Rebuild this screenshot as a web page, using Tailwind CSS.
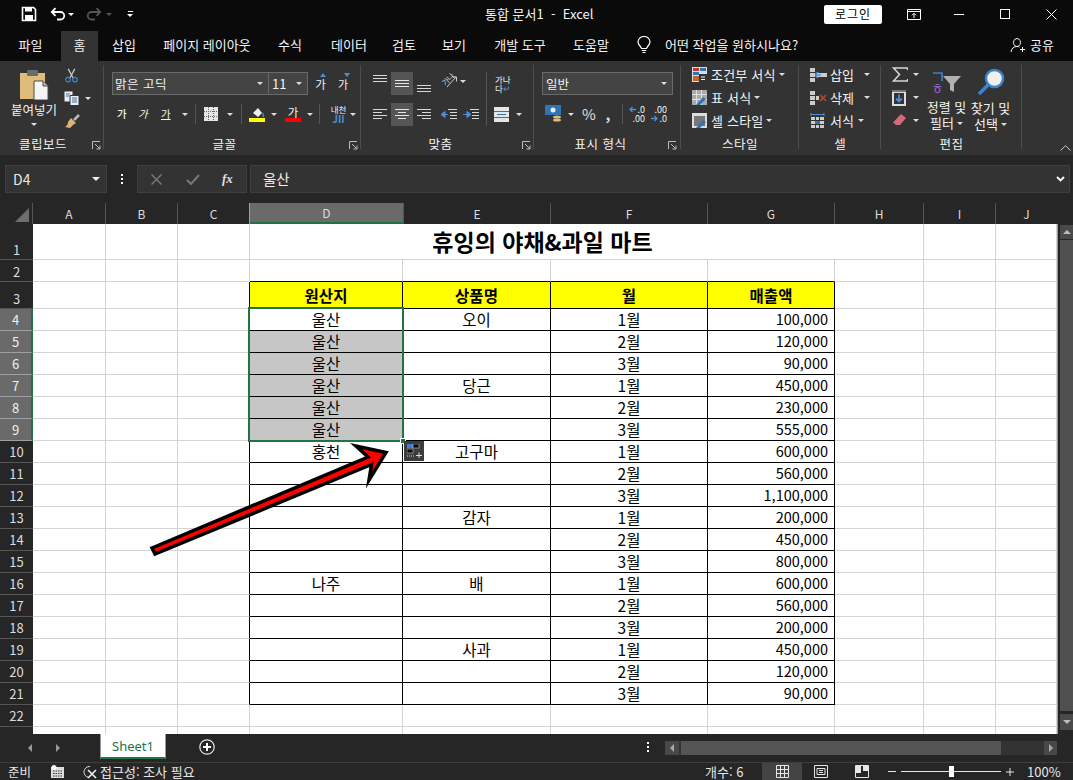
<!DOCTYPE html>
<html lang="ko">
<head>
  <meta charset="UTF-8" />
  <title>통합 문서1 - Excel</title>
  <script src="https://cdn.jsdelivr.net/npm/@tailwindcss/browser@4"></script>
</head>
<body class="w-[1073px] h-[780px] overflow-hidden bg-[#262626] text-[12px] leading-[16px] text-[#f0f0f0] font-['Noto_Sans_CJK_KR','Noto_Sans',sans-serif]">

  <!-- title bar -->
  <div class="h-[28px] bg-[#0a0a0a] flex items-center">
    <div class="w-[21px]"></div>
    <svg class="w-[16px] h-[16px]" viewBox="0 0 16 16"><path d="M1.5 1.5h11l2 2v11h-13z" fill="none" stroke="#fff" stroke-width="1.6"/><rect x="4" y="1.5" width="7" height="4" fill="#fff"/><rect x="4" y="9" width="8" height="5.5" fill="#fff"/></svg>
    <div class="w-[13px]"></div>
    <svg class="w-[16px] h-[14px]" viewBox="0 0 16 14"><path d="M2 5h8.5a3.6 3.6 0 0 1 0 7.5H7M5.5 1.2 1.8 5l3.7 3.8" fill="none" stroke="#fff" stroke-width="1.8"/></svg>
    <div class="w-[7px] flex justify-end ml-[1px]"><span class="w-0 h-0 border-x-[3px] border-x-transparent border-t-[3px] border-t-white"></span></div>
    <div class="w-[12px]"></div>
    <svg class="w-[16px] h-[14px]" viewBox="0 0 16 14"><path d="M14 5H5.500a3.600 3.600 0 0 0 0 7.500H9M10.500 1.200 14.200 5l-3.700 3.800" fill="none" stroke="#555" stroke-width="1.8"/></svg>
    <div class="w-[10px] flex justify-end"><span class="w-0 h-0 border-x-[3px] border-x-transparent border-t-[3px] border-t-[#555]"></span></div>
    <div class="w-[15px]"></div>
    <div class="flex flex-col items-center gap-[2px]"><span class="w-[5px] h-[1px] bg-white"></span><span class="w-0 h-0 border-x-[3px] border-x-transparent border-t-[3px] border-t-white"></span></div>
    <div class="w-[352px]"></div>
    <div class="w-[108px] text-[13px] whitespace-pre text-[#f4f4f4]">통합 문서1  -  Excel</div>
    <div class="w-[231px]"></div>
    <div class="w-[58px] h-[19px] bg-white rounded-[2px] text-black text-[12px] flex items-center justify-center tracking-[1px]">로그인</div>
    <div class="w-[25px]"></div>
    <svg class="w-[14px] h-[11px]" viewBox="0 0 14 11"><path d="M.5.500h13v10H.5zM.5 2.500h13M7 9V4.500M5 6.300 7 4.300l2 2" fill="none" stroke="#fff"/></svg>
    <div class="w-[33px]"></div>
    <div class="w-[10px] h-[1px] bg-white"></div>
    <div class="w-[36px]"></div>
    <div class="w-[10px] h-[10px] border border-white"></div>
    <div class="w-[36px]"></div>
    <svg class="w-[11px] h-[11px]" viewBox="0 0 11 11"><path d="M.5.500l10 10M10.500.500l-10 10" stroke="#fff" fill="none"/></svg>
  </div>

  <!-- tabs -->
  <div class="h-[33px] bg-[#0a0a0a] flex items-end text-[13px] text-[#f4f4f4]">
    <div class="w-[61px] h-[30px] pb-[3px] flex items-center justify-center">파일</div>
    <div class="w-[37px] h-[30px] pb-[3px] flex items-center justify-center bg-[#333333]">홈</div>
    <div class="w-[52px] h-[30px] pb-[3px] flex items-center justify-center">삽입</div>
    <div class="w-[114px] h-[30px] pb-[3px] flex items-center justify-center">페이지 레이아웃</div>
    <div class="w-[52px] h-[30px] pb-[3px] flex items-center justify-center">수식</div>
    <div class="w-[66px] h-[30px] pb-[3px] flex items-center justify-center">데이터</div>
    <div class="w-[44px] h-[30px] pb-[3px] flex items-center justify-center">검토</div>
    <div class="w-[56px] h-[30px] pb-[3px] flex items-center justify-center">보기</div>
    <div class="w-[76px] h-[30px] pb-[3px] flex items-center justify-center">개발 도구</div>
    <div class="w-[66px] h-[30px] pb-[3px] flex items-center justify-center">도움말</div>
    <div class="w-[13px]"></div>
    <div class="w-[28px] h-[30px] pb-[3px] flex items-center">
      <svg class="w-[14px] h-[18px]" viewBox="0 0 14 18"><path d="M4.500 12.500C4 10 1 9 1 6a6 5.500 0 0 1 12 0c0 3-3 4-3.500 6.500zM4.800 14.500h4.400M5.500 16.500h3" fill="none" stroke="#fff" stroke-width="1.200"/></svg>
    </div>
    <div class="w-[345px] h-[30px] pb-[3px] flex items-center">어떤 작업을 원하시나요?</div>
    <div class="h-[30px] pb-[3px] flex items-center">
      <svg class="w-[15px] h-[16px]" viewBox="0 0 15 16"><path d="M7 1.500a3.500 4 0 1 1-.01 0M1 15c.5-3.500 2.500-5.500 6-5.500 1 0 2 .2 2.500.6M10 12.500h5M12.500 10v5" fill="none" stroke="#f4f4f4"/></svg>
    </div>
    <div class="ml-[5px] h-[30px] pb-[3px] flex items-center">공유</div>
  </div>

  <!-- ribbon -->
  <div class="h-[94px] bg-[#333333] flex text-[13px] text-[#f2f2f2]">

    <!-- clipboard -->
    <div class="w-[104px] relative flex flex-col">
      <div class="h-[72px] flex">
        <div class="w-[64px] flex flex-col items-center pt-[8px] pr-[-4px]">
          <svg class="ml-[4px] w-[30px] h-[31px]" viewBox="0 0 30 31"><path d="M1 4h25v26H1z" fill="#e0bc7a"/><rect x="8" y="1" width="11" height="6" rx="1" fill="#6b6b6b"/><path d="M15 12h9l5 5v14H15z" fill="#f5f5f5" stroke="#4a4a4a"/><path d="M24 12v5h5" fill="#bbb" stroke="#4a4a4a"/></svg>
          <div class="mt-[2px] ml-[4px] text-[12.500px] whitespace-nowrap">붙여넣기</div>
          <span class="mt-[5px] ml-[4px] w-0 h-0 border-x-[3px] border-x-transparent border-t-[3px] border-t-[#e0e0e0]"></span>
        </div>
        <div class="flex flex-col pt-[7px] gap-[8px]">
          <svg class="w-[15px] h-[15px]" viewBox="0 0 16 18"><path d="M4 1l6 11M12 1 6 12" stroke="#c9c9c9" stroke-width="1.500"/><circle cx="3.800" cy="14" r="2.700" fill="none" stroke="#3e84cc" stroke-width="1.400"/><circle cx="12.200" cy="14" r="2.700" fill="none" stroke="#3e84cc" stroke-width="1.400"/></svg>
          <div class="flex items-center">
            <svg class="w-[16px] h-[15px]" viewBox="0 0 16 15"><path d="M.5.500h8v10h-8z" fill="#eee"/><path d="M6 4.500h9v10H6z" fill="#eee" stroke="#333"/><path d="M2 3h4M2 5h3M8 7h5M8 9h5M8 11h5" stroke="#2f75b5"/></svg>
            <span class="ml-[5px] w-0 h-0 border-x-[3px] border-x-transparent border-t-[3px] border-t-[#e0e0e0]"></span>
          </div>
          <svg class="w-[16px] h-[15px]" viewBox="0 0 16 15"><path d="M10 6 15 1" stroke="#bbb" stroke-width="2.500"/><path d="M7 4l5 5-3 2-3 3-5-1c2-1 3-3 3-5z" fill="#dcb27a"/></svg>
        </div>
      </div>
      <div class="h-[22px] pt-[3px] flex items-start justify-center pr-[18px] tracking-[.5px] text-[12.500px]">클립보드</div>
      <svg class="absolute left-[92px] top-[80px] w-[9px] h-[9px]" viewBox="0 0 9 9"><path d="M.500 8V.500H8M3 3l5 5M8 4.500V8H4.500" fill="none" stroke="#bbb"/></svg>
      <div class="absolute right-0 top-[4px] w-[1px] h-[84px] bg-[#4d4d4d]"></div>
    </div>

    <!-- font -->
    <div class="w-[257px] relative flex flex-col">
      <div class="h-[72px] pl-[8px] pt-[11px]">
        <div class="flex items-center h-[23px]">
          <div class="w-[157px] h-[23px] bg-[#444444] border border-[#6a6a6a] flex items-center justify-between pl-[2px] pr-[5px] text-[12.500px] tracking-[.5px]">맑은 고딕<span class="w-0 h-0 border-x-[3px] border-x-transparent border-t-[3px] border-t-[#ddd]"></span></div>
          <div class="w-[39px] h-[23px] bg-[#444444] border border-[#6a6a6a] border-l-0 flex items-center justify-between pl-[3px] pr-[5px] text-[13px]">11<span class="w-0 h-0 border-x-[3px] border-x-transparent border-t-[3px] border-t-[#ddd]"></span></div>
          <div class="w-[23px] ml-[1px] text-[11.500px] text-center relative">가<span class="absolute left-[11px] top-[-3px] w-0 h-0 border-x-[3px] border-x-transparent border-b-[4px] border-b-[#4a90d9]"></span></div>
          <div class="w-[22px] text-[11px] text-center relative">가<span class="absolute left-[12px] top-[-3px] w-0 h-0 border-x-[3px] border-x-transparent border-t-[4px] border-t-[#4a90d9]"></span></div>
        </div>
        <div class="flex items-center h-[24px] mt-[7px] text-[10.500px]">
          <div class="w-[5px]"></div>
          <span class="font-medium w-[21px]">가</span>
          <span class="italic w-[23px]">가</span>
          <span class="underline w-[21px]">가</span>
          <span class="w-0 h-0 border-x-[3px] border-x-transparent border-t-[3px] border-t-[#ddd]"></span>
          <div class="ml-[7px] mr-[8px] w-[1px] h-[20px] bg-[#555]"></div>
          <svg class="w-[14px] h-[14px]" viewBox="0 0 14 14"><rect width="14" height="14" fill="#e6e6e6"/><path d="M0 4.500h14M0 9.500h14M4.500 0v14M9.500 0v14" stroke="#666" stroke-dasharray="1 1"/></svg>
          <span class="ml-[9px] w-0 h-0 border-x-[3px] border-x-transparent border-t-[3px] border-t-[#ddd]"></span>
          <div class="ml-[8px] mr-[7px] w-[1px] h-[20px] bg-[#555]"></div>
          <svg class="w-[16px] h-[16px]" viewBox="0 0 16 16"><path d="M4 7l5-5 4 5-4 4z" fill="#eee"/><path d="M13 7c1.500 1 1.500 3 1 4" stroke="#3e84cc" fill="none" stroke-width="1.500"/><rect y="12" width="16" height="4" fill="#ffff00"/></svg>
          <span class="ml-[6px] w-0 h-0 border-x-[3px] border-x-transparent border-t-[3px] border-t-[#ddd]"></span>
          <div class="ml-[8px] w-[16px] flex flex-col items-center"><span class="text-[11.500px] leading-[12px]">가</span><span class="w-[16px] h-[4px] bg-[#ff0000]"></span></div>
          <span class="ml-[6px] w-0 h-0 border-x-[3px] border-x-transparent border-t-[3px] border-t-[#ddd]"></span>
          <div class="ml-[6px] mr-[10px] w-[1px] h-[20px] bg-[#555]"></div>
          <div class="w-[17px] flex flex-col items-center text-[8.500px] leading-[9px] whitespace-nowrap">내천<span class="text-[10px] leading-[9px] text-[#4a90d9] font-bold">JII</span></div>
          <span class="ml-[3px] w-0 h-0 border-x-[3px] border-x-transparent border-t-[3px] border-t-[#ddd]"></span>
        </div>
      </div>
      <div class="h-[22px] pt-[3px] flex items-start justify-center pr-[16px] text-[12.500px] tracking-[.5px]">글꼴</div>
      <svg class="absolute left-[245px] top-[80px] w-[9px] h-[9px]" viewBox="0 0 9 9"><path d="M.500 8V.500H8M3 3l5 5M8 4.500V8H4.500" fill="none" stroke="#bbb"/></svg>
      <div class="absolute right-0 top-[4px] w-[1px] h-[84px] bg-[#4d4d4d]"></div>
    </div>

    <!-- alignment -->
    <div class="w-[173px] relative flex flex-col">
      <div class="h-[72px] pl-[12px] pt-[11px]">
        <div class="flex items-start h-[23px]">
          <svg class="w-[14px] h-[23px]" viewBox="0 0 14 23"><path d="M0 3.500h14M0 6.500h14M0 9.500h14" stroke="#d8d8d8"/></svg>
          <div class="ml-[4px] w-[22px] h-[23px] bg-[#555555] flex items-center justify-center"><svg class="w-[14px] h-[9px]" viewBox="0 0 14 9"><path d="M0 1.500h14M0 4.500h14M0 7.500h14" stroke="#e6e6e6"/></svg></div>
          <svg class="ml-[4px] w-[14px] h-[23px]" viewBox="0 0 14 23"><path d="M0 13.500h14M0 16.500h14M0 19.500h14" stroke="#d8d8d8"/></svg>
          <div class="ml-[10px] w-[16px] h-[18px] relative">
            <span class="absolute left-0 top-[3px] -rotate-45 text-[7.500px] leading-[8px] whitespace-nowrap text-[#cfcfcf]">가나</span>
            <svg class="absolute left-[3px] top-[1px] w-[14px] h-[16px]" viewBox="0 0 14 16"><path d="M3 14 12 4M8 3.500l4.500.500v4.500" fill="none" stroke="#cfcfcf"/></svg>
          </div>
          <span class="ml-[3px] mt-[8px] w-0 h-0 border-x-[3px] border-x-transparent border-t-[3px] border-t-[#ddd]"></span>
          <div class="ml-[20px] mr-[8px] w-[1px] h-[54px] bg-[#555]"></div>
          <div class="text-[8.500px] leading-[9px] w-[16px] mt-[3px] whitespace-nowrap">가나<br>다<span class="text-[#4a90d9]">↵</span></div>
        </div>
        <div class="flex items-center h-[23px] mt-[8px]">
          <svg class="w-[14px] h-[11px]" viewBox="0 0 14 11"><path d="M0 .500h14M0 3.500h9M0 6.500h14M0 9.500h9" stroke="#d8d8d8"/></svg>
          <div class="ml-[4px] w-[22px] h-[23px] bg-[#555555] flex items-center justify-center"><svg class="w-[14px] h-[11px]" viewBox="0 0 14 11"><path d="M0 .500h14M3 3.500h8M0 6.500h14M3 9.500h8" stroke="#e6e6e6"/></svg></div>
          <svg class="ml-[4px] w-[14px] h-[11px]" viewBox="0 0 14 11"><path d="M0 .500h14M5 3.500h9M0 6.500h14M5 9.500h9" stroke="#d8d8d8"/></svg>
          <svg class="ml-[10px] w-[16px] h-[12px]" viewBox="0 0 16 12"><path d="M7 .500h9M9 3.500h7M9 6.500h7M9 9.500h7" stroke="#d8d8d8"/><path d="M7 5.500H3M0 5.500 4 2.500v6z" fill="#4a90d9" stroke="#4a90d9"/></svg>
          <svg class="ml-[6px] w-[16px] h-[12px]" viewBox="0 0 16 12"><path d="M7 .500h9M9 3.500h7M9 6.500h7M9 9.500h7" stroke="#d8d8d8"/><path d="M0 5.500h4M8 5.500 4 2.500v6z" fill="#4a90d9" stroke="#4a90d9"/></svg>
          <svg class="ml-[15px] w-[15px] h-[15px]" viewBox="0 0 15 15"><rect width="15" height="15" fill="#e6e6e6"/><path d="M0 4.500h15M0 10.500h15" stroke="#666"/><path d="M3 7.500h9" stroke="#2f75b5"/></svg>
          <span class="ml-[7px] w-0 h-0 border-x-[3px] border-x-transparent border-t-[3px] border-t-[#ddd]"></span>
        </div>
      </div>
      <div class="h-[22px] pt-[3px] flex items-start justify-center pr-[14px] text-[12.500px] tracking-[.5px]">맞춤</div>
      <svg class="absolute left-[161px] top-[80px] w-[9px] h-[9px]" viewBox="0 0 9 9"><path d="M.500 8V.500H8M3 3l5 5M8 4.500V8H4.500" fill="none" stroke="#bbb"/></svg>
      <div class="absolute right-0 top-[4px] w-[1px] h-[84px] bg-[#4d4d4d]"></div>
    </div>

    <!-- number -->
    <div class="w-[147px] relative flex flex-col">
      <div class="h-[72px] pl-[8px] pt-[11px]">
        <div class="w-[131px] h-[23px] bg-[#444444] border border-[#6a6a6a] flex items-center justify-between pl-[3px] pr-[5px] text-[12.500px]">일반<span class="w-0 h-0 border-x-[3px] border-x-transparent border-t-[3px] border-t-[#ddd]"></span></div>
        <div class="flex items-center h-[24px] mt-[7px]">
          <svg class="ml-[3px] w-[17px] h-[18px]" viewBox="0 0 17 18"><rect width="16" height="10" fill="#2f75b5"/><circle cx="8" cy="5" r="2.500" fill="#eee"/><ellipse cx="12" cy="12" rx="4" ry="1.600" fill="#e0bc7a"/><ellipse cx="12" cy="15" rx="4" ry="1.600" fill="#e0bc7a"/></svg>
          <span class="ml-[6px] w-0 h-0 border-x-[3px] border-x-transparent border-t-[3px] border-t-[#ddd]"></span>
          <span class="ml-[5px] text-[15px] w-[20px] text-center text-[#e0e0e0]">%</span>
          <span class="ml-[2px] text-[15px] font-bold w-[14px] text-center text-[#e0e0e0]">,</span>
          <div class="ml-[7px] mr-[7px] w-[1px] h-[20px] bg-[#555]"></div>
          <div class="w-[15px] flex flex-col items-end gap-[1px] text-[9px] leading-[8px]">
            <div class="flex items-center gap-[1px]"><svg class="w-[7px] h-[7px]" viewBox="0 0 7 7"><path d="M7 3.500H1M3.500 1 1 3.500 3.500 6" fill="none" stroke="#4a90d9" stroke-width="1.300"/></svg><span>.0</span></div>
            <span>.00</span>
          </div>
          <div class="ml-[7px] w-[15px] flex flex-col items-end gap-[1px] text-[9px] leading-[8px]">
            <span>.00</span>
            <div class="flex items-center gap-[1px]"><svg class="w-[7px] h-[7px]" viewBox="0 0 7 7"><path d="M0 3.500h6M3.500 1 6 3.500 3.500 6" fill="none" stroke="#4a90d9" stroke-width="1.300"/></svg><span>.0</span></div>
          </div>
        </div>
      </div>
      <div class="h-[22px] pt-[3px] flex items-start justify-center pr-[14px] text-[12.500px] tracking-[.5px]">표시 형식</div>
      <svg class="absolute left-[134px] top-[80px] w-[9px] h-[9px]" viewBox="0 0 9 9"><path d="M.500 8V.500H8M3 3l5 5M8 4.500V8H4.500" fill="none" stroke="#bbb"/></svg>
      <div class="absolute right-0 top-[4px] w-[1px] h-[84px] bg-[#4d4d4d]"></div>
    </div>

    <!-- styles -->
    <div class="w-[118px] relative flex flex-col">
      <div class="h-[72px] pl-[11px] pt-[2px] flex flex-col">
        <div class="h-[23px] flex items-center">
          <svg class="w-[15px] h-[15px] shrink-0" viewBox="0 0 15 15"><rect width="15" height="15" fill="#ddd"/><path d="M1 1h6v3H1z" fill="#c0392b"/><path d="M8 1h6v3H8z" fill="#2f75b5"/><path d="M1 5h6v3H1z" fill="#2f75b5"/><path d="M1 9h6v5H1z" fill="#c0642b"/><path d="M7 7h8v8H7z" fill="#333"/><path d="M9 10h4M9 12.500h4" stroke="#fff"/></svg>
          <span class="ml-[4px] whitespace-nowrap tracking-[.2px]">조건부 서식</span>
          <span class="ml-[3px] w-0 h-0 border-x-[3px] border-x-transparent border-t-[3px] border-t-[#ddd]"></span>
        </div>
        <div class="h-[23px] flex items-center">
          <svg class="w-[15px] h-[15px] shrink-0" viewBox="0 0 15 15"><rect width="15" height="15" fill="#aaa"/><path d="M0 4.500h15M0 9.500h15M4.500 0v15M9.500 0v15" stroke="#e0e0e0"/><path d="M4 15l7-8 3 2-6 6z" fill="#2f75b5"/></svg>
          <span class="ml-[4px] whitespace-nowrap tracking-[.2px]">표 서식</span>
          <span class="ml-[3px] w-0 h-0 border-x-[3px] border-x-transparent border-t-[3px] border-t-[#ddd]"></span>
        </div>
        <div class="h-[23px] flex items-center">
          <svg class="w-[15px] h-[15px] shrink-0" viewBox="0 0 15 15"><rect width="15" height="15" fill="#ddd"/><rect x="2" y="3" width="11" height="10" fill="#777"/><path d="M4 15l7-8 3 2-6 6z" fill="#2f75b5"/></svg>
          <span class="ml-[4px] whitespace-nowrap tracking-[.2px]">셀 스타일</span>
          <span class="ml-[3px] w-0 h-0 border-x-[3px] border-x-transparent border-t-[3px] border-t-[#ddd]"></span>
        </div>
      </div>
      <div class="h-[22px] pt-[3px] flex items-start justify-center text-[12.500px] tracking-[.5px]">스타일</div>
      <div class="absolute right-0 top-[4px] w-[1px] h-[84px] bg-[#4d4d4d]"></div>
    </div>

    <!-- cells -->
    <div class="w-[82px] relative flex flex-col">
      <div class="h-[72px] pl-[11px] pt-[2px] flex flex-col">
        <div class="h-[23px] flex items-center">
          <svg class="w-[17px] h-[14px] shrink-0" viewBox="0 0 17 14"><path d="M0 0h5v14H0zM6 5h11v4H6z" fill="#ccc"/><path d="M0 4.500h5M0 9.500h5" stroke="#333"/><path d="M11 7H5M5 7l3-3M5 7l3 3" stroke="#4a90d9" stroke-width="1.500" fill="none"/></svg>
          <span class="ml-[3px] whitespace-nowrap">삽입</span>
          <span class="ml-[10px] w-0 h-0 border-x-[3px] border-x-transparent border-t-[3px] border-t-[#ddd]"></span>
        </div>
        <div class="h-[23px] flex items-center">
          <svg class="w-[17px] h-[14px] shrink-0" viewBox="0 0 17 14"><path d="M0 0h5v14H0zM6 5h3v4H6z" fill="#ccc"/><path d="M0 4.500h5M0 9.500h5" stroke="#333"/><path d="M10 4l6 6M16 4l-6 6" stroke="#b5482f" stroke-width="1.500"/></svg>
          <span class="ml-[3px] whitespace-nowrap">삭제</span>
          <span class="ml-[10px] w-0 h-0 border-x-[3px] border-x-transparent border-t-[3px] border-t-[#ddd]"></span>
        </div>
        <div class="h-[23px] flex items-center">
          <svg class="w-[17px] h-[15px] shrink-0" viewBox="0 0 17 15"><path d="M1 1.500h13M1 0v3M14 0v3" stroke="#4a90d9"/><rect x="1" y="4" width="13" height="11" fill="#ccc"/><path d="M1 7.500h13M1 11.500h13M5.500 4v11M9.500 4v11" stroke="#333"/><rect x="5" y="8" width="5" height="3" fill="#2f75b5"/></svg>
          <span class="ml-[3px] whitespace-nowrap">서식</span>
          <span class="ml-[4px] w-0 h-0 border-x-[3px] border-x-transparent border-t-[3px] border-t-[#ddd]"></span>
        </div>
      </div>
      <div class="h-[22px] pt-[3px] flex items-start justify-center text-[12.500px]">셀</div>
      <div class="absolute right-0 top-[4px] w-[1px] h-[84px] bg-[#4d4d4d]"></div>
    </div>

    <!-- editing -->
    <div class="w-[141px] relative flex flex-col">
      <div class="h-[72px] flex">
        <div class="w-[44px] pl-[11px] pt-[2px] flex flex-col shrink-0">
          <div class="h-[23px] flex items-center">
            <svg class="w-[16px] h-[15px]" viewBox="0 0 16 15"><path d="M15.500 3V1H1.500l6 6.500-6 6.500h14v-2" fill="none" stroke="#d8d8d8" stroke-width="1.500"/></svg>
            <span class="ml-[5px] w-0 h-0 border-x-[3px] border-x-transparent border-t-[3px] border-t-[#ddd]"></span>
          </div>
          <div class="h-[23px] flex items-center">
            <svg class="w-[14px] h-[16px]" viewBox="0 0 14 16"><rect width="14" height="16" fill="#ddd"/><rect y="0" width="14" height="2" fill="#777"/><rect x="2" y="3" width="10" height="11" fill="#333"/><path d="M7 4.500v7M4 8.500l3 3 3-3" fill="none" stroke="#4a90d9" stroke-width="1.800"/></svg>
            <span class="ml-[7px] w-0 h-0 border-x-[3px] border-x-transparent border-t-[3px] border-t-[#ddd]"></span>
          </div>
          <div class="h-[23px] flex items-center">
            <svg class="w-[14px] h-[13px]" viewBox="0 0 14 13"><path d="M9 0l5 4-6 7H4L1 8.500z" fill="#d9687a"/></svg>
            <span class="ml-[7px] w-0 h-0 border-x-[3px] border-x-transparent border-t-[3px] border-t-[#ddd]"></span>
          </div>
        </div>
        <div class="w-[43px] shrink-0 flex flex-col items-center pt-[11px]">
          <svg class="w-[30px] h-[22px]" viewBox="0 0 30 22"><path d="M1 1h9v8" fill="none" stroke="#3e84cc" stroke-width="1.600"/><path d="M1.500 14.500h8M3.500 12.500h4" stroke="#8e5fc2" stroke-width="1.200"/><circle cx="5.500" cy="18" r="2.500" fill="none" stroke="#8e5fc2" stroke-width="1.200"/><path d="M11 4h18l-7 8v8l-4-2v-6z" fill="#b0b0b0"/></svg>
          <div class="mt-[5px] whitespace-nowrap leading-[16px]">정렬 및</div>
          <div class="leading-[16px] flex items-center gap-[3px]">필터<span class="w-0 h-0 border-x-[3px] border-x-transparent border-t-[3px] border-t-[#ddd]"></span></div>
        </div>
        <div class="w-[45px] shrink-0 flex flex-col items-center pt-[7px]">
          <svg class="w-[28px] h-[27px]" viewBox="0 0 28 27"><circle cx="17.500" cy="10.500" r="8.500" fill="#f0f0f0" stroke="#3e84cc" stroke-width="2.500"/><path d="M11.500 16.500 2 26" stroke="#3e84cc" stroke-width="3.500"/></svg>
          <div class="mt-[5px] whitespace-nowrap leading-[16px]">찾기 및</div>
          <div class="leading-[16px] flex items-center gap-[3px]">선택<span class="w-0 h-0 border-x-[3px] border-x-transparent border-t-[3px] border-t-[#ddd]"></span></div>
        </div>
      </div>
      <div class="h-[22px] pt-[3px] flex items-start justify-center text-[12.500px] tracking-[.5px]">편집</div>
      <div class="absolute right-0 top-[4px] w-[1px] h-[84px] bg-[#4d4d4d]"></div>
    </div>

    <!-- collapse -->
    <div class="flex-1 flex items-end justify-end pr-[2px] pb-[4px]">
      <svg class="w-[11px] h-[6px]" viewBox="0 0 11 6"><path d="M.5 5.500 5.500.700l5 4.800" fill="none" stroke="#ccc"/></svg>
    </div>
  </div>

  <!-- formula bar -->
  <div class="h-[48px] pt-[10px] pb-[10px] pl-[5px] pr-[3px] flex items-stretch bg-[#262626]">
    <div class="w-[102px] bg-[#333333] border border-[#3f3f3f] flex items-center justify-between pl-[7px] pr-[6px] text-[14px] text-[#e8e8e8]">D4<span class="w-0 h-0 border-x-[4px] border-x-transparent border-t-[4px] border-t-[#eee]"></span></div>
    <div class="w-[30px] flex flex-col items-center justify-center gap-[2px]">
      <span class="w-[2px] h-[2px] bg-white"></span><span class="w-[2px] h-[2px] bg-white"></span><span class="w-[2px] h-[2px] bg-white"></span>
    </div>
    <div class="w-[110px] bg-[#333333] border border-[#3f3f3f] flex items-center">
      <svg class="ml-[13px] w-[11px] h-[11px]" viewBox="0 0 11 11"><path d="M.5.500l10 10M10.500.500l-10 10" stroke="#777" stroke-width="1.500"/></svg>
      <svg class="ml-[24px] w-[14px] h-[11px]" viewBox="0 0 14 11"><path d="M1 6l4 4 8-9" fill="none" stroke="#777" stroke-width="2"/></svg>
      <span class="ml-[22px] text-[13px] italic font-bold text-[#e0e0e0] font-['Liberation_Serif',serif]">fx</span>
    </div>
    <div class="ml-[3px] flex-1 bg-[#333333] border border-[#3f3f3f] flex items-center justify-between pl-[12px] pr-[4px] text-[14.500px] text-[#f0f0f0]">
      울산
      <svg class="w-[9px] h-[6px]" viewBox="0 0 9 6"><path d="M1 1l3.500 3.500L8 1" fill="none" stroke="#fff" stroke-width="1.800"/></svg>
    </div>
  </div>

  <!-- column headers -->
  <div class="h-[21px] flex text-[12px] text-[#dcdcdc]">
    <div class="w-[33px] relative border-r border-[#555]">
      <span class="absolute right-[3px] bottom-[2px] w-0 h-0 border-l-[14px] border-l-transparent border-b-[14px] border-b-[#6e6e6e]"></span>
    </div>
    <div class="w-[73px] flex items-center justify-center border-r border-[#555]">A</div>
    <div class="w-[72px] flex items-center justify-center border-r border-[#555]">B</div>
    <div class="w-[72px] flex items-center justify-center border-r border-[#a0a0a0]">C</div>
    <div class="w-[153px] flex items-center justify-center bg-[#6a6a6a] border-b-2 border-[#217346]">D</div>
    <div class="w-[148px] flex items-center justify-center border-r border-[#555] border-l border-l-[#555]">E</div>
    <div class="w-[157px] flex items-center justify-center border-r border-[#555]">F</div>
    <div class="w-[127px] flex items-center justify-center border-r border-[#555]">G</div>
    <div class="w-[89px] flex items-center justify-center border-r border-[#555]">H</div>
    <div class="w-[72px] flex items-center justify-center border-r border-[#555]">I</div>
    <div class="w-[61px] flex items-center justify-center">J</div>
  </div>

  <!-- sheet -->
  <div class="h-[510px] flex">
    <div class="relative w-[1057px] h-[510px] overflow-hidden">
      <div id="sheet" class="grid grid-cols-[33px_73px_72px_72px_153px_148px_157px_127px_89px_72px_61px] grid-rows-[36px_22px_27px_repeat(19,22px)_22px_8px] w-[1057px] bg-white text-black text-[15.500px]"></div>

      <!-- selection of D4:D9 -->
      <div class="absolute left-[248px] top-[83px] w-[156px] h-[135px] border-2 border-[#217346]"></div>
      <div class="absolute left-[400px] top-[214px] w-[6px] h-[6px] bg-[#217346] border border-white"></div>

      <!-- paste options -->
      <div class="absolute left-[404px] top-[217px] w-[20px] h-[20px] bg-[#3c3c3c] flex items-center justify-center">
        <svg class="w-[15px] h-[14px]" viewBox="0 0 15 14"><rect x="0" y="0" width="6" height="4" fill="#3e7ae0"/><rect x="6" y="0" width="6" height="4" fill="#0a0a0a" stroke="#ddd" stroke-width=".5"/><rect x="0" y="5" width="6" height="4" fill="#0a0a0a" stroke="#ddd" stroke-width=".5"/><path d="M0 12h8" stroke="#ccc" stroke-dasharray="1 1"/><path d="M9 11.500h6M12 8.500v6" stroke="#ddd"/></svg>
      </div>

      <!-- arrow drawn over the sheet -->
      <svg class="absolute left-0 top-0 w-[1057px] h-[510px] pointer-events-none" viewBox="0 224 1057 510">
        <path d="M152 548 368 457 356 446 386 452.500 369 480 371.500 464.500 155 554z" fill="#ff0000" stroke="#000" stroke-width="3.500" stroke-linejoin="miter" stroke-miterlimit="8"/>
      </svg>
    </div>

    <!-- vertical scrollbar -->
    <div class="w-[16px] border-l border-[#9a9a9a] pl-[2px] flex flex-col">
      <div class="h-[14px] bg-[#4a4a4a] flex items-center justify-center mt-[1px]"><span class="w-0 h-0 border-x-[4px] border-x-transparent border-b-[4px] border-b-[#bbb]"></span></div>
      <div class="h-[474px] mt-[1px]"><div class="h-[471px] bg-[#505050]"></div></div>
      <div class="h-[16px] bg-[#4a4a4a] flex items-center justify-center"><span class="w-0 h-0 border-x-[4px] border-x-transparent border-t-[4px] border-t-[#bbb]"></span></div>
    </div>
  </div>

  <!-- sheet tabs -->
  <div class="h-[28px] bg-[#262626] flex relative">
    <div class="w-[100px] flex items-center pl-[28px] gap-[24px]">
      <span class="w-0 h-0 border-y-[4px] border-y-transparent border-r-[4px] border-r-[#999]"></span>
      <span class="w-0 h-0 border-y-[4px] border-y-transparent border-l-[4px] border-l-[#999]"></span>
    </div>
    <div class="w-[66px] h-[25px] bg-white border-b-2 border-[#217346] border-x border-x-[#9a9a9a] flex items-center justify-center text-[13px] text-[#217346] font-['Noto_Sans',sans-serif]">Sheet1</div>
    <div class="ml-[33px] flex items-center h-[25px]">
      <svg class="w-[16px] h-[16px]" viewBox="0 0 16 16"><circle cx="8" cy="8" r="7.200" fill="none" stroke="#e8e8e8" stroke-width="1.200"/><path d="M8 4v8M4 8h8" stroke="#fff" stroke-width="2"/></svg>
    </div>
    <div class="ml-[425px] flex flex-col justify-center items-center gap-[2px] w-[16px] h-[26px]">
      <span class="w-[2px] h-[2px] bg-white"></span><span class="w-[2px] h-[2px] bg-white"></span><span class="w-[2px] h-[2px] bg-white"></span>
    </div>
    <div class="ml-[9px] mt-[7px] w-[392px] h-[14px] bg-[#333333] flex">
      <div class="w-[14px] bg-[#484848] flex items-center justify-center"><span class="w-0 h-0 border-y-[4px] border-y-transparent border-r-[4px] border-r-[#aaa]"></span></div>
      <div class="ml-[2px] w-[320px] bg-[#555555]"></div>
      <div class="ml-[43px] w-[13px] bg-[#484848] flex items-center justify-center"><span class="w-0 h-0 border-y-[4px] border-y-transparent border-l-[4px] border-l-[#aaa]"></span></div>
    </div>
  </div>

  <!-- status bar -->
  <div class="h-[18px] border-t border-[#3f3f3f] flex items-center text-[13px] text-[#e6e6e6]">
    <span class="ml-[8px] w-[43px] text-[12.500px]">준비</span>
    <svg class="w-[13px] h-[13px]" viewBox="0 0 13 13"><rect y="2" width="13" height="11" fill="#ddd"/><circle cx="3" cy="2.500" r="2.500" fill="#fff"/><path d="M2 6h9M2 8.500h9M2 11h9" stroke="#333" stroke-dasharray="1.500 1"/></svg>
    <svg class="ml-[18px] w-[15px] h-[14px]" viewBox="0 0 15 14"><path d="M8 1.500a5.500 5.500 0 1 0-1 11" fill="none" stroke="#ddd"/><path d="M6 5l8 8M14 5l-8 8" stroke="#eee" stroke-width="1.600"/></svg>
    <span class="ml-[3px] w-[605px] whitespace-nowrap">접근성: 조사 필요</span>
    <span class="w-[57px] whitespace-nowrap">개수: 6</span>
    <div class="w-[40px] h-[17px] bg-[#444444] flex items-center justify-center">
      <svg class="w-[13px] h-[13px]" viewBox="0 0 13 13"><path d="M.5.500h12v12H.5zM.5 4.500h12M.5 8.500h12M4.500.500v12M8.500.500v12" fill="none" stroke="#e6e6e6"/></svg>
    </div>
    <svg class="ml-[12px] w-[14px] h-[13px]" viewBox="0 0 14 13"><path d="M.5.500h13v12H.5zM3 3.500h8v6H3zM5 5.500h4M5 7.500h4" fill="none" stroke="#e6e6e6"/></svg>
    <svg class="ml-[27px] w-[14px] h-[13px]" viewBox="0 0 14 13"><path d="M.5.500h13v12H.5z" fill="none" stroke="#e6e6e6"/><path d="M1 1h5v7H1zM8 1h5v5H8z" fill="#e6e6e6"/></svg>
    <div class="ml-[19px] w-[8px] h-[1px] bg-[#e6e6e6]"></div>
    <div class="ml-[5px] w-[100px] h-[1px] bg-[#e6e6e6] relative"><span class="absolute left-[48px] top-[-5px] w-[5px] h-[11px] bg-white"></span></div>
    <svg class="ml-[5px] w-[8px] h-[8px]" viewBox="0 0 8 8"><path d="M0 4h8M4 0v8" stroke="#e6e6e6"/></svg>
    <span class="ml-[13px]">100%</span>
  </div>

  <script>
    // D, E, F, G for rows 4 to 21
    const data = [
      ['울산', '오이', '1월', '100,000'], ['울산', '', '2월', '120,000'], ['울산', '', '3월', '90,000'],
      ['울산', '당근', '1월', '450,000'], ['울산', '', '2월', '230,000'], ['울산', '', '3월', '555,000'],
      ['홍천', '고구마', '1월', '600,000'], ['', '', '2월', '560,000'], ['', '', '3월', '1,100,000'],
      ['', '감자', '1월', '200,000'], ['', '', '2월', '450,000'], ['', '', '3월', '800,000'],
      ['나주', '배', '1월', '600,000'], ['', '', '2월', '560,000'], ['', '', '3월', '200,000'],
      ['', '사과', '1월', '450,000'], ['', '', '2월', '120,000'], ['', '', '3월', '90,000']
    ];
    const sheet = document.getElementById('sheet');

    function cell(cls, text) {
      const d = document.createElement('div');
      d.className = cls;
      d.textContent = text || '';
      sheet.appendChild(d);
    }

    const plain = 'border-r border-b border-[#d4d4d4]';
    const black = 'border-r border-b border-black flex items-center justify-center pb-[1px]';
    const blackRight = 'border-r border-b border-black flex items-center justify-end pr-[6px] pb-[1px] text-[14.500px]';
    const grayCell = 'border-r border-b border-black flex items-center justify-center pb-[1px] bg-[#c6c6c6]';
    const headCell = 'border-r border-b border-black flex items-center justify-center pb-[1px] bg-[#ffff00] font-bold';
    const cEdge = 'border-b border-b-[#d4d4d4] border-r border-r-black';
    const rowHead = 'bg-[#262626] border-b border-[#555] flex items-center justify-center text-[13px] text-[#dcdcdc]';
    const rowHeadLow = 'bg-[#262626] border-b border-[#555] flex items-end justify-center pb-[1px] text-[13px] text-[#dcdcdc]';
    const rowHeadSel = 'bg-[#6a6a6a] border-b border-[#a0a0a0] border-r-2 border-r-[#217346] flex items-center justify-center text-[13px] text-[#f0f0f0]';

    for (let r = 1; r <= 23; r++) {
      if (r === 1) {
        cell(rowHeadLow, r);
        cell(plain); cell(plain); cell(plain);
        cell('col-span-4 border-b border-[#d4d4d4] flex items-center justify-center pb-[2px] text-[23px] font-bold', '휴잉의 야채&과일 마트');
        cell(plain); cell(plain); cell(plain);
      } else if (r === 2) {
        cell(rowHeadLow, r);
        cell(plain); cell(plain); cell('border-r border-b border-b-[#d4d4d4] border-r-[#d4d4d4]');
        for (let c = 0; c < 4; c++) cell('border-r border-r-[#d4d4d4] border-b border-b-black');
        cell(plain); cell(plain); cell(plain);
      } else if (r === 3) {
        cell(rowHeadLow, r);
        cell(plain); cell(plain); cell(cEdge);
        ['원산지', '상품명', '월', '매출액'].forEach(t => cell(headCell, t));
        cell(plain); cell(plain); cell(plain);
      } else if (r <= 21) {
        const row = data[r - 4];
        const sel = r >= 4 && r <= 9;
        cell(sel ? rowHeadSel : rowHead, r);
        cell(plain); cell(plain); cell(cEdge);
        cell(r >= 5 && r <= 9 ? grayCell : black, row[0]);
        cell(black, row[1]);
        cell(black, row[2]);
        cell(blackRight, row[3]);
        cell(plain); cell(plain); cell(plain);
      } else {
        cell(r === 22 ? rowHead : 'bg-[#262626]', r === 22 ? r : '');
        for (let c = 0; c < 10; c++) cell(plain);
      }
    }
  </script>
</body>
</html>
